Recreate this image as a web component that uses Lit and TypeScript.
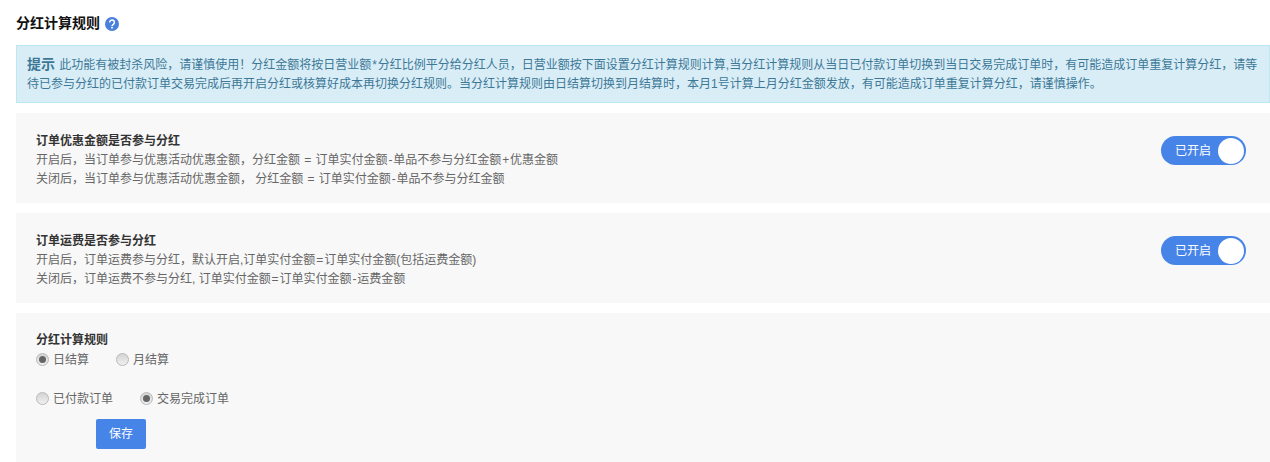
import { LitElement, html, css } from 'lit';
import { customElement } from 'lit/decorators.js';

// the reference font draws these symbols wider than Arial does
const WIDE = /([=*+-])/;

@customElement('app-root')
export class AppRoot extends LitElement {
  static override styles = css`
    :host {
      display: block;
      width: 1270px;
      height: 462px;
      overflow: hidden;
      background: #fff;
      font: 12px/19px Arial, "Liberation Sans", "Noto Sans CJK SC", sans-serif;
      color: #666;
      box-sizing: border-box;
      padding: 14px 0 0 16px;
    }
    .page { width: 1254px; }
    .title {
      display: flex;
      align-items: center;
      gap: 5px;
      height: 19px;
      font-size: 14px;
      font-weight: bold;
      color: #111;
    }
    .title svg { display: block; }
    .notice {
      margin-top: 12px;
      height: 58px;
      box-sizing: border-box;
      padding: 9px 10px;
      background: #d9edf7;
      border: 1px solid #bce8f1;
      color: #3c7896;
    }
    .notice b { font-size: 14px; margin-right: 1px; }
    .panel {
      margin-top: 10px;
      background: #f8f8f8;
      box-sizing: border-box;
    }
    .row {
      height: 90px;
      padding: 19px 24px 0 20px;
      display: flex;
      align-items: flex-start;
      justify-content: space-between;
    }
    h4 {
      margin: 0;
      font-size: 12px;
      font-weight: bold;
      color: #333;
    }
    .row p { margin: 0; }
    .wide { padding: 0 0.9px; }
    .toggle {
      margin-top: 4px;
      width: 85px;
      height: 29px;
      border-radius: 15px;
      background: #4684e8;
      position: relative;
      color: #fff;
      box-sizing: border-box;
      padding-left: 14px;
      line-height: 30px;
    }
    .knob {
      position: absolute;
      right: 2px;
      top: 1.5px;
      width: 26px;
      height: 26px;
      border-radius: 50%;
      background: #fff;
    }
    .rules {
      height: 149px;
      padding: 18px 20px 0;
    }
    .radios {
      display: flex;
      gap: 27px;
      height: 19px;
      margin-top: 1px;
      align-items: center;
    }
    .radios + .radios { margin-top: 20px; }
    label { display: flex; align-items: center; gap: 4px; }
    .dot {
      width: 13px;
      height: 13px;
      margin-top: -3px;
      border-radius: 50%;
      border: 1px solid #b8b8b8;
      box-sizing: border-box;
      background: linear-gradient(#d4d4d4, #f0f0f0);
      display: flex;
      align-items: center;
      justify-content: center;
    }
    .dot.on::after {
      content: '';
      width: 7px;
      height: 7px;
      border-radius: 50%;
      background: #666;
    }
    .save {
      display: block;
      margin: 10px 0 0 60px;
      width: 50px;
      height: 30px;
      border: 0;
      border-radius: 2px;
      background: #4684e8;
      color: #fff;
      font: inherit;
      padding: 0;
    }
  `;

  private spaced(text: string) {
    return text.split(WIDE).map((part) =>
      WIDE.test(part) ? html`<span class="wide">${part}</span>` : part
    );
  }

  private toggle(label: string) {
    return html`<div class="toggle">${label}<span class="knob"></span></div>`;
  }

  private radio(label: string, on: boolean) {
    return html`<label><span class="dot ${on ? 'on' : ''}"></span>${label}</label>`;
  }

  private setting(title: string, on: string, off: string) {
    return html`
      <div class="panel row">
        <div>
          <h4>${title}</h4>
          <p>${this.spaced(on)}</p>
          <p>${this.spaced(off)}</p>
        </div>
        ${this.toggle('已开启')}
      </div>
    `;
  }

  override render() {
    return html`
      <div class="page">
        <div class="title">
          分红计算规则
          <svg width="14" height="14" viewBox="0 0 14 14">
            <circle cx="7" cy="7" r="7" fill="#4a7fdc" />
            <path d="M4.6 5.4a2.4 2.4 0 1 1 3.7 2c-.9.6-1.3 1-1.3 1.9" fill="none" stroke="#fff" stroke-width="1.5" />
            <rect x="6.2" y="10" width="1.6" height="1.6" fill="#fff" />
          </svg>
        </div>
        <div class="notice">
          <b>提示</b>
          ${this.spaced('此功能有被封杀风险，请谨慎使用！分红金额将按日营业额*分红比例平分给分红人员，日营业额按下面设置分红计算规则计算,当分红计算规则从当日已付款订单切换到当日交易完成订单时，有可能造成订单重复计算分红，请等待已参与分红的已付款订单交易完成后再开启分红或核算好成本再切换分红规则。当分红计算规则由日结算切换到月结算时，本月1号计算上月分红金额发放，有可能造成订单重复计算分红，请谨慎操作。')}
        </div>
        ${this.setting(
          '订单优惠金额是否参与分红',
          '开启后，当订单参与优惠活动优惠金额，分红金额 = 订单实付金额-单品不参与分红金额+优惠金额',
          '关闭后，当订单参与优惠活动优惠金额， 分红金额 = 订单实付金额-单品不参与分红金额'
        )}
        ${this.setting(
          '订单运费是否参与分红',
          '开启后，订单运费参与分红，默认开启,订单实付金额=订单实付金额(包括运费金额)',
          '关闭后，订单运费不参与分红, 订单实付金额=订单实付金额-运费金额'
        )}
        <div class="panel rules">
          <h4>分红计算规则</h4>
          <div class="radios">
            ${this.radio('日结算', true)}
            ${this.radio('月结算', false)}
          </div>
          <div class="radios">
            ${this.radio('已付款订单', false)}
            ${this.radio('交易完成订单', true)}
          </div>
          <button class="save">保存</button>
        </div>
      </div>
    `;
  }
}
